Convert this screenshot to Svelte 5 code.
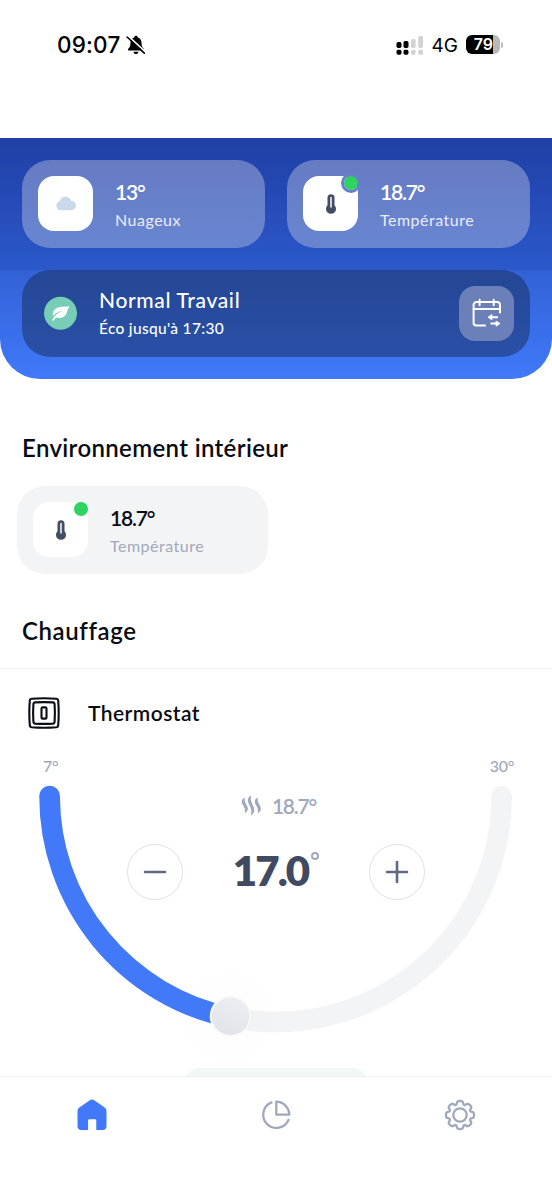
<script>
  const min = 7;
  const max = 30;
  const radius = 226;
  const center = { x: 275.6, y: 45 };

  let current = 18.7;
  let target = $state(17);

  let angle = $derived(((target - min) / (max - min)) * Math.PI);
  let knob = $derived({
    x: center.x - radius * Math.cos(angle),
    y: center.y + radius * Math.sin(angle),
  });

  const left = center.x - radius;
  const right = center.x + radius;

  function change(step) {
    target = Math.min(max, Math.max(min, target + step));
  }

  // teeth of the settings gear
  const gear = Array.from({ length: 161 }, (_, i) => {
    const a = (i / 160) * Math.PI * 2;
    const wave = Math.tanh(1.6 * Math.cos(8 * a) + 0.4);
    const r = 12.4 + 1.7 * wave;
    const turn = a + 0.03 * Math.sin(8 * a);
    return `${(16 + r * Math.sin(turn)).toFixed(2)},${(16 - r * Math.cos(turn)).toFixed(2)}`;
  }).join(" ");
</script>

{#snippet thermometer()}
  <svg width="12" height="22" viewBox="0 0 12 22">
    <path
      d="M6 1.2a3.500 3.500 0 0 0-3.500 3.500v7.600a5 5 0 1 0 7 0V4.700A3.500 3.500 0 0 0 6 1.200z"
      fill="#454d65"
    />
    <path d="M6 4.700v9" stroke="#d5d9e4" stroke-width="1.900" stroke-linecap="round" />
  </svg>
{/snippet}

<div class="phone">
  <div class="status">
    <div class="clock">
      <span class="time">09:07</span>
      <svg width="20" height="20" viewBox="0 0 20 20">
        <path
          d="M10 .8c1 0 1.700.7 1.800 1.600 2.500.8 3.700 2.900 3.700 5.300 0 3.500.9 4.600 2.200 6 .7.8.3 1.800-.8 1.800H3.100c-1.100 0-1.500-1-.8-1.800 1.300-1.400 2.200-2.500 2.200-6 0-2.400 1.200-4.500 3.700-5.300C8.300 1.500 9 .8 10 .8zM7.500 16.700h5c-.2 1.400-1.200 2.300-2.500 2.300s-2.300-.9-2.500-2.300z"
        />
        <path d="M2 .8 19.500 17" stroke="#fff" stroke-width="1.800" />
        <path d="M1.100 2 18.300 18.200" stroke="#000" stroke-width="1.600" stroke-linecap="round" />
      </svg>
    </div>
    <div class="network">
      <svg width="28" height="20" viewBox="0 0 28 20">
        <rect x=".5" y="7" width="5" height="6" rx="1.700" />
        <rect x="7.500" y="6" width="5" height="7" rx="1.700" />
        <g fill="#d2d2d2">
          <rect x="15" y="4" width="4.600" height="9" rx="1.700" />
          <rect x="22.200" y="1" width="4.800" height="12" rx="1.700" />
          <rect x="15" y="14.800" width="4.600" height="5" rx="1.700" />
          <rect x="22.200" y="14.800" width="4.800" height="5" rx="1.700" />
        </g>
        <rect x=".5" y="14.800" width="5" height="5" rx="1.700" />
        <rect x="7.500" y="14.800" width="5" height="5" rx="1.700" />
      </svg>
      <span class="carrier">4G</span>
      <div class="battery"><span>79</span></div>
      <i class="tip"></i>
    </div>
  </div>

  <header>
    <div class="upper">
      <div class="card glass">
        <div class="tile">
          <svg width="20" height="15" viewBox="0 0 20 15">
            <path
              d="M5 14.300a4.600 4.600 0 0 1-1.300-9A5.900 5.900 0 0 1 15 4.700a4.800 4.800 0 0 1 .2 9.600z"
              fill="#c9d8ea"
            />
          </svg>
        </div>
        <div class="info">
          <strong>13°</strong>
          <span>Nuageux</span>
        </div>
      </div>
      <div class="card glass">
        <div class="tile">
          {@render thermometer()}
          <i class="dot ring"></i>
        </div>
        <div class="info">
          <strong>{current}°</strong>
          <span>Température</span>
        </div>
      </div>
    </div>
    <div class="schedule">
      <svg width="34" height="34" viewBox="0 0 34 34">
        <circle cx="16.500" cy="17.200" r="16.500" fill="#78cdb6" />
        <path
          d="M25.700 10.400c-4.600.2-9.200-.4-12.900 1.600-3.300 1.800-4.600 4.600-3.900 7.900 2.600-3 6-4.600 10.300-5.700-4.600 2-8.600 4.700-10.700 9.400-.5 1.200.9 1.700 1.500.7.600-1 1.200-1.900 1.900-2.700 4.900 1.500 9.200-.5 11-5.200.8-2.200 1-4.500 2.800-6z"
          fill="#fff"
        />
      </svg>
      <div class="plan">
        <strong>Normal Travail</strong>
        <span>Éco jusqu'à 17:30</span>
      </div>
      <button class="calendar" aria-label="Planning">
        <svg width="30" height="30" viewBox="0 0 30 30" fill="none" stroke="#fff" stroke-width="2">
          <path d="M13.800 27.600H4.400a2.800 2.800 0 0 1-2.800-2.800V6.900a2.800 2.800 0 0 1 2.800-2.800h20.800A2.800 2.800 0 0 1 28 6.900v8.300" />
          <path d="M1.600 10.900H28M7.600 1.700v5.500M21.700 1.700v5.500" stroke-linecap="round" />
          <path d="M26 19.200h-8M18.500 25.600h8" />
          <path d="m16 19.200 4-2.600v5.200zM28 25.600l-4-2.600v5.200z" fill="#fff" stroke-width=".8" stroke-linejoin="round" />
        </svg>
      </button>
    </div>
  </header>

  <main>
    <h2>Environnement intérieur</h2>
    <div class="card plain">
      <div class="tile">
        {@render thermometer()}
        <i class="dot"></i>
      </div>
      <div class="info">
        <strong>{current}°</strong>
        <span>Température</span>
      </div>
    </div>

    <h2 class="heating">Chauffage</h2>
    <section>
      <div class="device">
        <svg width="32" height="32" viewBox="0 0 32 32" fill="none" stroke="#0b0d16" stroke-width="2.100">
          <path d="M3.500 1.800Q16 .8 28.500 1.800q1.500.2 1.700 1.700 1 12.500 0 25-.2 1.500-1.700 1.700-12.500 1-25 0-1.500-.2-1.700-1.700-1-12.500 0-25 .2-1.500 1.700-1.700z" />
          <path d="M7 5.400q9-.6 18 0 1.400.2 1.600 1.600.6 9 0 18-.2 1.400-1.600 1.600-9 .6-18 0-1.400-.2-1.600-1.600-.6-9 0-18 .2-1.400 1.600-1.600z" />
          <rect x="13.500" y="10.400" width="5" height="11.200" rx="1.200" />
        </svg>
        <h3>Thermostat</h3>
      </div>

      <div class="dial">
        <svg class="arc" width="552" height="300" viewBox="0 0 552 300" fill="none">
          <defs>
            <linearGradient id="knob" x1=".7" y1="0" x2=".3" y2="1">
              <stop offset="0" stop-color="#eceef2" />
              <stop offset="1" stop-color="#e0e3e8" />
            </linearGradient>
            <radialGradient id="glow">
              <stop offset=".3" stop-color="#8c96aa" stop-opacity=".02" />
              <stop offset="1" stop-color="#8c96aa" stop-opacity="0" />
            </radialGradient>
          </defs>
          <path
            d="M{left} {center.y}A{radius} {radius} 0 0 0 {right} {center.y}"
            stroke="#f3f4f6"
            stroke-width="20.700"
            stroke-linecap="round"
          />
          <path
            d="M{left} {center.y}A{radius} {radius} 0 0 0 {knob.x} {knob.y}"
            stroke="#4179f8"
            stroke-width="20.700"
            stroke-linecap="round"
          />
          <circle cx={knob.x} cy={knob.y} r="54" fill="url(#glow)" />
          <circle cx={knob.x + 0.6} cy={knob.y - 1} r="20.500" fill="#f8f9fa" />
          <circle cx={knob.x + 1} cy={knob.y - 1} r="18.700" fill="url(#knob)" />
        </svg>
        <div class="limits">
          <span>{min}°</span>
          <span>{max}°</span>
        </div>
        <div class="current">
          <svg width="22" height="22" viewBox="0 0 22 22" fill="#a1a8bc">
            <path d="M4.900 2.400C1.500 4 1 6.500 2.800 9.700c1.700 3 2.900 5.100 1.900 8.500 3.400-1.900 4-4.500 2.100-7.800C5 7.300 4.100 5.200 4.900 2.400z" />
            <path d="M11.200.2C7.500 2.500 7.100 5.600 9.100 9.400c2.100 3.900 3.100 7.100 1.500 11.300 4.200-2.600 4.600-6.100 2.500-10C11.100 7 10.100 4 11.200.2z" />
            <path d="M17.900 2.400c-3.400 1.600-3.900 4.100-2.100 7.300 1.700 3 2.900 5.100 1.900 8.500 3.400-1.900 4-4.500 2.100-7.800-1.800-3.100-2.700-5.200-1.900-8z" />
          </svg>
          <span>{current}°</span>
        </div>
        <div class="controls">
          <button class="round" aria-label="Moins" onclick={() => change(-0.5)}>
            <svg width="24" height="24" viewBox="0 0 24 24">
              <path d="M2 12h20" />
            </svg>
          </button>
          <div class="target">{target.toFixed(1)}<sup></sup></div>
          <button class="round" aria-label="Plus" onclick={() => change(0.5)}>
            <svg width="24" height="24" viewBox="0 0 24 24">
              <path d="M2 12h20M12 2v20" />
            </svg>
          </button>
        </div>
      </div>
      <div class="mode"></div>
    </section>
  </main>

  <nav>
    <button aria-label="Accueil">
      <svg width="32" height="32" viewBox="0 0 32 32">
        <path
          d="M13.800 1.200a4 4 0 0 1 4.400 0l10.500 7.300a4 4 0 0 1 1.800 3.300v15.500a3.700 3.700 0 0 1-3.700 3.700h-6.500v-9.600a1.200 1.200 0 0 0-1.200-1.200h-5.800a1.200 1.200 0 0 0-1.200 1.200V31H5.200a3.700 3.700 0 0 1-3.700-3.700V11.800a4 4 0 0 1 1.800-3.300z"
          fill="#4179f8"
        />
      </svg>
    </button>
    <button aria-label="Statistiques">
      <svg width="32" height="32" viewBox="0 0 32 32" fill="none" stroke="#a1a8bc" stroke-width="2.300" stroke-linecap="round" stroke-linejoin="round">
        <path d="M11.500 3.400A13.200 13.200 0 1 0 28.600 20.700" />
        <path d="M16.300 2.700v13h13A13.200 13.200 0 0 0 16.300 2.700z" />
      </svg>
    </button>
    <button aria-label="Réglages">
      <svg width="32" height="32" viewBox="0 0 32 32" fill="none" stroke="#a1a8bc" stroke-width="2.300" stroke-linejoin="round">
        <polygon points={gear} />
        <circle cx="16" cy="16" r="6.700" />
      </svg>
    </button>
  </nav>
</div>

<style>
  :global(body) {
    background: #fff;
  }

  .phone {
    width: 552px;
    height: 1200px;
    display: flex;
    flex-direction: column;
    overflow: hidden;
    background: #fff;
    color: #0a0c14;
    font-family: Lato, "Open Sans", sans-serif;
  }

  button {
    padding: 0;
    border: none;
    background: none;
    cursor: pointer;
  }

  svg {
    display: block;
    flex: none;
  }

  h2,
  h3 {
    margin: 0;
    font-weight: 600;
  }

  .status {
    box-sizing: border-box;
    height: 138px;
    flex: none;
    display: flex;
    justify-content: space-between;
    padding: 30.500px 49px 0 57px;
    font-family: Inter, sans-serif;
    color: #000;
  }

  .clock,
  .network {
    height: 28px;
    display: flex;
    align-items: center;
  }

  .clock {
    gap: 6px;
  }

  .time {
    font-size: 22.500px;
    font-weight: 500;
    letter-spacing: 0.200px;
  }

  .carrier {
    margin: 1px 8px 0 8px;
    font-size: 19px;
  }

  .battery {
    box-sizing: border-box;
    width: 34px;
    height: 19px;
    padding-right: 3px;
    border-radius: 6px;
    background: linear-gradient(to right, #000 79%, #b9b9b9 79%);
    color: #fff;
    font-size: 16px;
    font-weight: 600;
    line-height: 19px;
    text-align: right;
  }

  .battery span {
    margin-right: 4px;
  }

  .tip {
    width: 2px;
    height: 6px;
    margin-left: 1px;
    border-radius: 0 2px 2px 0;
    background: #bbb;
  }

  header {
    box-sizing: border-box;
    height: 241px;
    flex: none;
    border-radius: 0 0 40px 40px;
    background: linear-gradient(#2145ad, #4079f9);
    overflow: hidden;
  }

  .upper {
    box-sizing: border-box;
    height: 131.500px;
    display: flex;
    gap: 22px;
    padding: 22px 22px 0;
    background: linear-gradient(rgba(30, 58, 158, 0.500), rgba(38, 79, 190, 0.500));
  }

  .card {
    box-sizing: border-box;
    width: 243px;
    height: 87.500px;
    display: flex;
    align-items: center;
    gap: 22px;
    padding-left: 16px;
    border-radius: 28px;
  }

  .glass {
    background: rgba(185, 192, 225, 0.450);
    color: #fff;
  }

  .plain {
    width: 251px;
    margin: 23px 0 0 17px;
    background: #f3f4f6;
  }

  .tile {
    position: relative;
    width: 55px;
    height: 55px;
    display: flex;
    align-items: center;
    justify-content: center;
    border-radius: 16px;
    background: #fff;
  }

  .dot {
    position: absolute;
    top: -0.500px;
    right: 0;
    width: 14px;
    height: 14px;
    border-radius: 50%;
    background: #2fd35f;
  }

  .ring {
    top: -3px;
    right: -3px;
    border: 3px solid #687fc8;
    background-clip: padding-box;
  }

  .info,
  .plan {
    display: flex;
    flex-direction: column;
  }

  .info strong {
    margin-top: 3px;
    font-size: 21px;
    font-weight: 600;
    line-height: 26px;
    letter-spacing: -1.200px;
  }

  .info span {
    margin-top: 3px;
    font-size: 16px;
    line-height: 24px;
    letter-spacing: 0.500px;
    color: #e9edf9;
  }

  .plain .info span {
    color: #a1a8bc;
  }

  .schedule {
    box-sizing: border-box;
    height: 87.500px;
    display: flex;
    align-items: center;
    margin: 0 22px;
    padding: 0 16px 0 22px;
    border-radius: 28px;
    background: linear-gradient(#244696, #2a50a6);
    color: #fff;
  }

  .plan {
    flex: 1;
    margin: 1px 0 0 21px;
  }

  .plan strong {
    font-size: 21px;
    font-weight: 500;
    line-height: 28px;
    letter-spacing: 0.650px;
  }

  .plan span {
    font-size: 15.500px;
    font-weight: 500;
    line-height: 28px;
    letter-spacing: 0.320px;
  }

  .calendar {
    width: 55px;
    height: 55px;
    display: flex;
    align-items: center;
    justify-content: center;
    border-radius: 16px;
    background: #6b80b9;
  }

  main {
    flex: 1;
    min-height: 0;
    overflow: hidden;
  }

  h2 {
    margin: 54px 0 0 22px;
    font-size: 24px;
    line-height: 30px;
    letter-spacing: 0.350px;
  }

  h2.heating {
    margin-top: 42px;
    letter-spacing: 0.600px;
  }

  section {
    margin-top: 22.500px;
    border-top: 1px solid #f0f1f3;
  }

  .device {
    display: flex;
    align-items: center;
    gap: 28px;
    padding: 28px 0 0 28px;
  }

  h3 {
    margin-top: -1px;
    font-size: 21px;
    line-height: 32px;
    letter-spacing: 0.450px;
  }

  .dial {
    position: relative;
    height: 339px;
  }

  .arc {
    position: absolute;
    top: 22px;
    left: 0;
    overflow: visible;
  }

  .limits {
    position: relative;
    display: flex;
    justify-content: space-between;
    padding: 27px 38px 0 43px;
    color: #a1a8bc;
    font-size: 16px;
    font-weight: 500;
    line-height: 20px;
    letter-spacing: -0.300px;
  }

  .current {
    position: relative;
    display: flex;
    align-items: center;
    justify-content: center;
    gap: 10px;
    margin: 18px 0 0 4px;
    color: #a1a8bc;
    font-size: 21px;
    font-weight: 600;
    line-height: 24px;
    letter-spacing: -1.200px;
  }

  .controls {
    position: relative;
    display: flex;
    align-items: center;
    justify-content: space-between;
    margin: 26px 127px 0;
  }

  .round {
    box-sizing: border-box;
    width: 56px;
    height: 56px;
    display: flex;
    align-items: center;
    justify-content: center;
    border: 1px solid #dddfe8;
    border-radius: 50%;
    background: #fff;
  }

  .round path {
    fill: none;
    stroke: #626983;
    stroke-width: 2.600;
    stroke-linecap: round;
  }

  .target {
    display: flex;
    margin-top: -5px;
    color: #424a62;
    font-size: 42px;
    font-weight: 800;
    line-height: 52px;
    letter-spacing: -1.900px;
  }

  sup {
    width: 4px;
    height: 4px;
    margin: 8px 0 0 3px;
    border: 2px solid #a1a8bc;
    border-radius: 50%;
  }

  .mode {
    width: 186px;
    height: 40px;
    margin: 0 auto;
    border-radius: 18px;
    background: #f0f8f8;
  }

  nav {
    box-sizing: border-box;
    height: 124px;
    flex: none;
    display: flex;
    align-items: flex-start;
    padding-top: 22px;
    border-top: 1px solid #eeeff2;
    background: #fff;
  }

  nav button {
    flex: 1;
    display: flex;
    justify-content: center;
  }
</style>
